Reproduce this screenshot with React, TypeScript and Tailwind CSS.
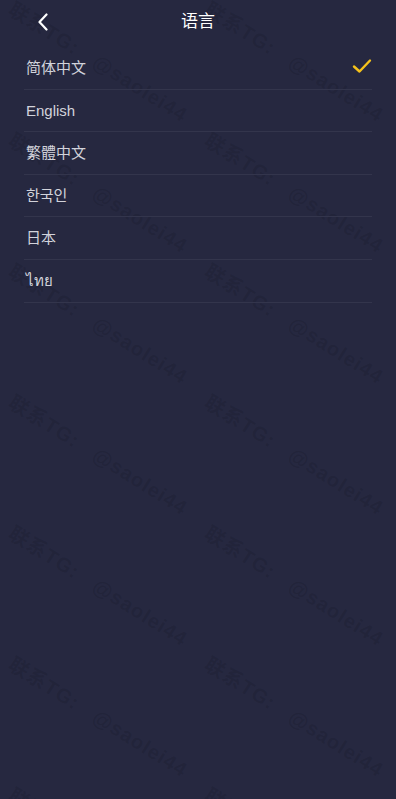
import { useState } from 'react';

const langs = ['简体中文', 'English', '繁體中文', '한국인', '日本', 'ไทย'];

function Watermark() {
  const tiles = Array.from({ length: 14 });
  return (
    <div className='pointer-events-none absolute inset-x-0 top-[-4px] grid grid-cols-[196px_196px] overflow-hidden'>
      {tiles.map((_, i) => (
        <div key={i} className='h-[131px] flex items-center justify-center'>
          <span className='rotate-[32deg] whitespace-nowrap text-[20px] font-bold tracking-[1px] text-black/10'>
            联系TG:&nbsp;&nbsp;&nbsp;@saolei44
          </span>
        </div>
      ))}
    </div>
  );
}

function App() {
  const [active, setActive] = useState(0);
  return (
    <div className='relative min-h-[799px] overflow-hidden bg-[#262840] font-["Liberation_Sans","Noto_Sans_CJK_SC","Noto_Sans",sans-serif]'>
      <Watermark />
      <div className='relative'>
        <header className='h-[47px] flex items-center relative'>
          <button className='absolute left-[34px] top-[11px] w-[18px] h-[22px] flex items-center justify-center'>
            <svg width='12' height='18' viewBox='0 0 12 18' fill='none'>
              <path d='M9.5 1.5L2.5 9L9.5 16.5' stroke='#ffffff' strokeWidth='2.2' strokeLinecap='round' strokeLinejoin='round' />
            </svg>
          </button>
          <h1 className='mx-auto text-[17px] text-white mt-[-3px]'>语言</h1>
        </header>
        <ul className='px-6'>
          {langs.map((l, i) => (
            <li
              key={l}
              onClick={() => setActive(i)}
              className='h-[42.6px] flex items-center justify-between border-b border-[#33354c] pl-[2px]'
            >
              <span className='text-[15px] text-[#d2d3db] mt-[1px]'>{l}</span>
              {active === i && (
                <svg width='20' height='16' viewBox='0 0 20 16' fill='none' className='mt-[-4px]'>
                  <path d='M2 8.5L7.5 13.5L18 2.5' stroke='#f5c21b' strokeWidth='2.4' strokeLinecap='round' strokeLinejoin='round' />
                </svg>
              )}
            </li>
          ))}
        </ul>
      </div>
    </div>
  );
}

export default App;
